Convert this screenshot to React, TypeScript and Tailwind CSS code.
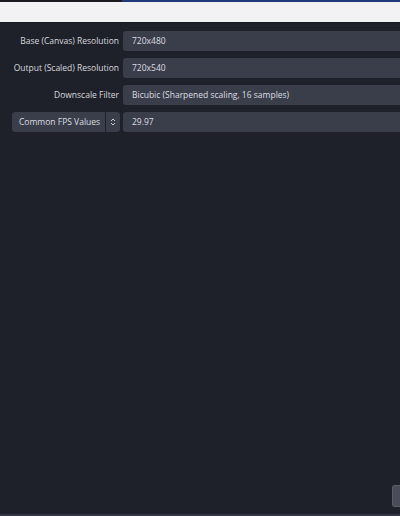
import React from "react";

const font = { fontFamily: '"Open Sans", "Noto Sans", sans-serif' };

function Field({ label, value }: { label: string; value: string }) {
  return (
    <div className="flex items-center h-5">
      <div className="w-[120px] shrink-0 pr-[1px] text-right text-[8.5px] text-[#d8d9de] whitespace-nowrap">{label}</div>
      <div className="ml-[3px] flex-1 h-5 rounded-l-[3px] bg-[#3a3d4a] flex items-center pl-[9px] text-[8.5px] text-[#dcdde2] whitespace-nowrap">
        {value}
      </div>
    </div>
  );
}

export default function App() {
  return (
    <div className="w-[400px] h-[516px] overflow-hidden flex flex-col bg-[#1f212a]" style={font}>
      <div className="flex h-[2px] shrink-0">
        <div className="w-[122px] bg-[#1b1c22]" />
        <div className="flex-1 bg-[#1f3a7c]" />
      </div>
      <div className="h-[20px] shrink-0 bg-[#f2f2f5]" />
      <div className="h-[1px] shrink-0 bg-[#18191f]" />

      <div className="flex-1 flex flex-col gap-[7px] pt-[8px]">
        <Field label="Base (Canvas) Resolution" value="720x480" />
        <Field label="Output (Scaled) Resolution" value="720x540" />
        <Field label="Downscale Filter" value="Bicubic (Sharpened scaling, 16 samples)" />
        <div className="flex items-center h-5">
          <div className="w-[120px] shrink-0 pl-[12px] flex h-5">
            <div className="flex-1 h-5 rounded-l-[3px] bg-[#3a3d4a] flex items-center pl-[7px] text-[8.5px] text-[#dcdde2] whitespace-nowrap">
              Common FPS Values
            </div>
            <div className="w-[14px] h-5 ml-[1px] rounded-r-[3px] bg-[#3a3d4a] flex items-center justify-center">
              <svg width="6" height="10" viewBox="0 0 6 10" fill="none" stroke="#c9cad0" strokeWidth="1">
                <path d="M1 4 L3 2 L5 4" />
                <path d="M1 6 L3 8 L5 6" />
              </svg>
            </div>
          </div>
          <div className="ml-[3px] flex-1 h-5 rounded-l-[3px] bg-[#3a3d4a] flex items-center pl-[9px] text-[8.5px] text-[#dcdde2]">
            29.97
          </div>
        </div>
      </div>

      <div className="flex justify-end pb-[7px] shrink-0">
        <div className="w-[8px] h-[22px] rounded-l-[3px] bg-[#4a4c59] border border-r-0 border-[#5a5c6a]" />
      </div>
      <div className="h-[2px] shrink-0 bg-[#353548]" />
    </div>
  );
}
